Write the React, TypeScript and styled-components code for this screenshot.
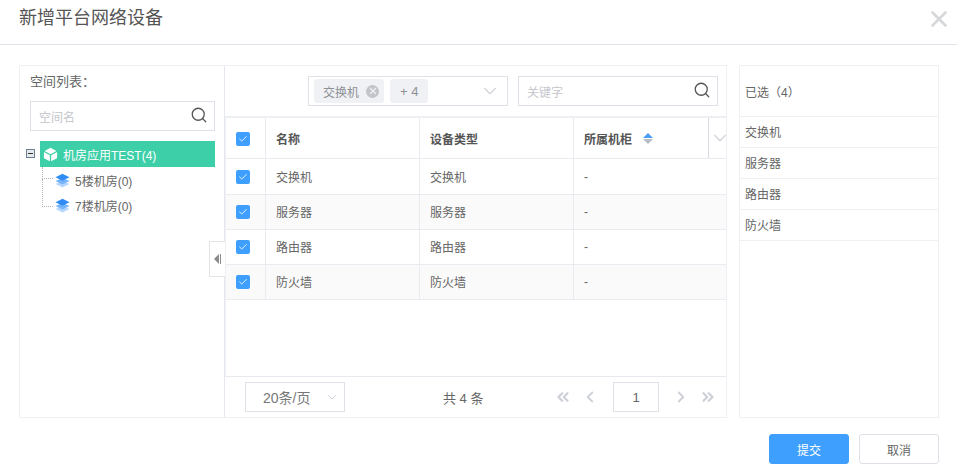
import React from 'react'
import styled, { createGlobalStyle } from 'styled-components'
import { Search, ChevronDown, ChevronLeft, ChevronRight, ChevronsLeft, ChevronsRight, X, Check } from 'lucide-react'

const GlobalStyle = createGlobalStyle`
  html, body { margin: 0; padding: 0; background: #fff; }
  * { box-sizing: border-box; }
  body {
    font-family: "Liberation Sans", "Noto Sans CJK SC", sans-serif;
    font-size: 12px;
    color: #666;
  }
`

const Modal = styled.div`
  width: 957px;
  height: 476px;
  display: flex;
  flex-direction: column;
  overflow: hidden;
`

const Header = styled.header`
  height: 45px;
  flex: none;
  border-bottom: 1px solid #e2e3ea;
  padding: 0 5px 8px 19px;
  display: flex;
  align-items: center;
  justify-content: space-between;
`

const Title = styled.h1`
  margin: 0;
  font-size: 18px;
  font-weight: 400;
  line-height: 36px;
  color: #555;
`

const CloseIcon = styled(X)`
  color: #d6d7db;
  margin-top: 2px;
`

const Body = styled.div`
  height: 353px;
  margin: 20px 18px 0 19px;
  display: flex;
  gap: 12px;
`

const MainBox = styled.div`
  width: 708px;
  display: flex;
  position: relative;
  border: 1px solid #eef0f4;
`

const TreePanel = styled.aside`
  width: 205px;
  flex: none;
  padding: 6px 9px 0 10px;
  border-right: 1px solid #e6e8ef;
`

const PanelLabel = styled.div`
  font-size: 13px;
  line-height: 19px;
  color: #666;
`

const InputBox = styled.div<{ $w: number }>`
  width: ${p => p.$w}px;
  height: 30px;
  flex: none;
  border: 1px solid #dfe1e8;
  padding: 0 6px 0 8px;
  display: flex;
  align-items: center;
  justify-content: space-between;
  background: #fff;
`

const Placeholder = styled.span`
  font-size: 12px;
  color: #c4c6cc;
`

const SearchIcon = styled(Search)`
  color: #555;
  margin-top: -2px;
`

const SpaceSearch = styled(InputBox)`
  margin-top: 10px;
`

const TreeRoot = styled.div`
  position: relative;
  margin-top: 10px;
`

const RootRow = styled.div`
  height: 26px;
  margin-left: 10px;
  background: #3ccfa8;
  color: #fff;
  display: flex;
  align-items: center;
  gap: 5px;
  padding-left: 3px;
  font-size: 12px;
`

const ExpandBox = styled.span`
  position: absolute;
  left: -4px;
  top: 8px;
  width: 9px;
  height: 9px;
  border: 1px solid #6d7f90;
  background: #e4e9ee;
  &::after {
    content: '';
    position: absolute;
    left: 1px;
    right: 1px;
    top: 3px;
    height: 1px;
    background: #333;
  }
`

const ChildRow = styled.div<{ $first?: boolean }>`
  position: relative;
  height: 25px;
  margin-top: ${p => (p.$first ? '1px' : '0')};
  padding-left: 25px;
  display: flex;
  align-items: center;
  gap: 5px;
  font-size: 12px;
  color: #666;
  &::before {
    content: '';
    position: absolute;
    left: 12px;
    top: ${p => (p.$first ? '-1px' : '-14px')};
    height: ${p => (p.$first ? '11px' : '27px')};
    width: 10px;
    border-left: 1px dotted #b5b5b5;
    border-bottom: 1px dotted #b5b5b5;
  }
`

const Collapse = styled.div`
  position: absolute;
  left: 189px;
  top: 175px;
  width: 16px;
  height: 36px;
  background: #fff;
  border: 1px solid #e4e4e4;
  border-right: none;
  display: flex;
  align-items: center;
  justify-content: center;
  gap: 1px;
`

const CollapseArrow = styled.span`
  width: 0;
  height: 0;
  border-top: 5px solid transparent;
  border-bottom: 5px solid transparent;
  border-right: 5px solid #8a8a8a;
`

const CollapseBar = styled.span`
  width: 1px;
  height: 10px;
  background: #8a8a8a;
`

const TablePanel = styled.section`
  flex: 1;
  min-width: 0;
  display: flex;
  flex-direction: column;
`

const FilterBar = styled.div`
  height: 50px;
  flex: none;
  padding: 10px 9px 0 83px;
  display: flex;
  gap: 10px;
`

const SelectBox = styled(InputBox)`
  padding: 0 6px 0 5px;
`

const TagGroup = styled.div`
  display: flex;
  gap: 6px;
`

const Tag = styled.span`
  height: 24px;
  padding: 0 5px 0 9px;
  border-radius: 3px;
  background: #f0f1f4;
  color: #8e9096;
  display: flex;
  align-items: center;
  gap: 7px;
  font-size: 12px;
`

const CountTag = styled(Tag)`
  padding: 0 10px;
  font-size: 13px;
`

const TagClose = styled.span`
  width: 13px;
  height: 13px;
  border-radius: 50%;
  background: #c2c4ca;
  color: #f0f1f4;
  display: flex;
  align-items: center;
  justify-content: center;
`

const Caret = styled(ChevronDown)`
  color: #cfd1d8;
`

const TableWrap = styled.div`
  flex: 1;
  border-top: 2px solid #eeeff2;
  border-bottom: 1px solid #e8e9ef;
  border-right: 1px solid #eeeff2;
  margin-right: 0;
  width: 502px;
  border-left: 1px solid #eeeff2;
`

const Row = styled.div<{ $head?: boolean; $alt?: boolean }>`
  height: ${p => (p.$head ? '41px' : '35px')};
  display: grid;
  grid-template-columns: 40px 154px 154px 1fr;
  background: ${p => (p.$alt ? '#fafafa' : '#fff')};
  border-bottom: 1px solid #e9ebf1;
  ${p => p.$head && 'grid-template-columns: 40px 154px 154px 135px 1fr;'}
  &:nth-child(2) { height: 36px; }
`

const Cell = styled.div<{ $head?: boolean; $lift?: boolean }>`
  display: flex;
  align-items: center;
  padding-left: 10px;
  padding-bottom: ${p => (p.$lift ? '2px' : '0')};
  border-right: 1px solid #e9ebf1;
  font-size: 12px;
  font-weight: ${p => (p.$head ? 700 : 400)};
  color: ${p => (p.$head ? '#555' : '#666')};
  &:last-child { border-right: none; }
`

const CheckCell = styled(Cell)<{ $head?: boolean }>`
  padding-top: ${p => (p.$head ? '1px' : '0')};
`

const CheckMark = styled.span`
  width: 14px;
  height: 14px;
  border-radius: 2px;
  background: #3f9fff;
  color: #fff;
  display: flex;
  align-items: center;
  justify-content: center;
`

const SortIcon = styled.span`
  display: inline-flex;
  flex-direction: column;
  gap: 1px;
  margin-left: 11px;
  &::before, &::after {
    content: '';
    width: 0;
    height: 0;
    border-left: 5px solid transparent;
    border-right: 5px solid transparent;
  }
  &::before { border-bottom: 5px solid #4a9ff5; }
  &::after { border-top: 5px solid #b8bcc6; }
`

const ColToggle = styled.div`
  display: flex;
  align-items: center;
  justify-content: center;
  border-left: 1px solid #d9dbe2;
  margin-left: -1px;
`

const Pager = styled.div`
  height: 40px;
  flex: none;
  padding-left: 20px;
  padding-right: 9px;
  display: flex;
  align-items: center;
  justify-content: space-between;
`

const PageSize = styled.div`
  width: 100px;
  height: 30px;
  border: 1px solid #dfe1e8;
  display: flex;
  align-items: center;
  justify-content: space-between;
  padding: 0 4px 0 17px;
  font-size: 14px;
  color: #777;
`

const Total = styled.div`
  font-size: 13px;
  color: #666;
  margin-left: 98px;
`

const PageControls = styled.div`
  display: flex;
  align-items: center;
  margin-left: auto;
  color: #cdd0d8;
`

const PageNumber = styled.div`
  width: 46px;
  height: 30px;
  margin: 0 13px 0 14px;
  border: 1px solid #dfe1e8;
  display: flex;
  align-items: center;
  justify-content: center;
  font-size: 13px;
  color: #666;
`

const PageBtn = styled.span<{ $gap?: number }>`
  display: flex;
  margin-right: ${p => p.$gap ?? 0}px;
`

const SelectedPanel = styled.aside`
  width: 200px;
  flex: none;
  border: 1px solid #eef0f4;
`

const SelectedHead = styled.div`
  height: 51px;
  padding-left: 5px;
  display: flex;
  align-items: center;
  font-size: 12px;
  color: #666;
  border-bottom: 1px solid #eef0f4;
`

const SelectedRow = styled.div`
  height: 31px;
  padding: 0 0 2px 5px;
  display: flex;
  align-items: center;
  font-size: 12px;
  color: #666;
  border-bottom: 1px solid #eef0f4;
`

const Footer = styled.footer`
  margin-top: 16px;
  padding-right: 18px;
  display: flex;
  justify-content: flex-end;
  gap: 10px;
`

const Button = styled.button<{ $primary?: boolean }>`
  width: 80px;
  height: 30px;
  border-radius: 3px;
  border: 1px solid ${p => (p.$primary ? '#3f9fff' : '#dfe1e8')};
  background: ${p => (p.$primary ? '#3f9fff' : '#fff')};
  color: ${p => (p.$primary ? '#fff' : '#666')};
  font: inherit;
  font-size: 12px;
  padding: 0;
`

const CubeIcon = () => (
  <svg width="15" height="15" viewBox="0 0 16 16" fill="#fff">
    <path d="M8 .8l6.4 3.4L8 7.6 1.6 4.2z" />
    <path d="M1 5.3l6.3 3.4v6.6L1 11.9z" />
    <path d="M15 5.3L8.7 8.7v6.6l6.3-3.4z" />
  </svg>
)

const LayersIcon = () => (
  <svg width="15" height="15" viewBox="0 0 15 15">
    <path d="M7.5 8l7 3-7 3.5-7-3.5z" fill="#b5d7ff" />
    <path d="M7.5 5l7 3-7 3.5-7-3.5z" fill="#75b3fb" />
    <path d="M7.5 .8l7 3.5-7 3.5-7-3.5z" fill="#2f8df5" />
  </svg>
)

const rows = ['交换机', '服务器', '路由器', '防火墙']

const Tick = () => (
  <CheckMark>
    <Check size={10} strokeWidth={2} />
  </CheckMark>
)

const App: React.FC = () => {
  return (
    <Modal>
      <GlobalStyle />
      <Header>
        <Title>新增平台网络设备</Title>
        <CloseIcon size={26} strokeWidth={2.4} />
      </Header>

      <Body>
        <MainBox>
          <TreePanel>
            <PanelLabel>空间列表：</PanelLabel>
            <SpaceSearch $w={185}>
              <Placeholder>空间名</Placeholder>
              <SearchIcon size={18} strokeWidth={1.7} />
            </SpaceSearch>
            <TreeRoot>
              <ExpandBox />
              <RootRow>
                <CubeIcon />
                机房应用TEST(4)
              </RootRow>
              <ChildRow $first>
                <LayersIcon />
                5楼机房(0)
              </ChildRow>
              <ChildRow>
                <LayersIcon />
                7楼机房(0)
              </ChildRow>
            </TreeRoot>
          </TreePanel>

          <Collapse>
            <CollapseArrow />
            <CollapseBar />
          </Collapse>

          <TablePanel>
            <FilterBar>
              <SelectBox $w={200}>
                <TagGroup>
                  <Tag>
                    交换机
                    <TagClose>
                      <X size={10} strokeWidth={3} />
                    </TagClose>
                  </Tag>
                  <CountTag>+ 4</CountTag>
                </TagGroup>
                <Caret size={22} strokeWidth={1.2} />
              </SelectBox>
              <InputBox $w={200}>
                <Placeholder>关键字</Placeholder>
                <SearchIcon size={18} strokeWidth={1.7} />
              </InputBox>
            </FilterBar>

            <TableWrap>
              <Row $head>
                <CheckCell $head>
                  <Tick />
                </CheckCell>
                <Cell $head>名称</Cell>
                <Cell $head>设备类型</Cell>
                <Cell $head>
                  所属机柜
                  <SortIcon />
                </Cell>
                <ColToggle>
                  <Caret size={22} strokeWidth={1.2} />
                </ColToggle>
              </Row>
              {rows.map((name, i) => (
                <Row key={name} $alt={i % 2 === 1}>
                  <CheckCell>
                    <Tick />
                  </CheckCell>
                  <Cell $lift={i > 0}>{name}</Cell>
                  <Cell $lift={i > 0}>{name}</Cell>
                  <Cell>-</Cell>
                </Row>
              ))}
            </TableWrap>

            <Pager>
              <PageSize>
                20条/页
                <Caret size={16} strokeWidth={1.4} />
              </PageSize>
              <Total>共 4 条</Total>
              <PageControls>
                <PageBtn $gap={9}>
                  <ChevronsLeft size={18} strokeWidth={3} />
                </PageBtn>
                <PageBtn>
                  <ChevronLeft size={18} strokeWidth={2.4} />
                </PageBtn>
                <PageNumber>1</PageNumber>
                <PageBtn $gap={9}>
                  <ChevronRight size={18} strokeWidth={2.4} />
                </PageBtn>
                <PageBtn>
                  <ChevronsRight size={18} strokeWidth={3} />
                </PageBtn>
              </PageControls>
            </Pager>
          </TablePanel>
        </MainBox>

        <SelectedPanel>
          <SelectedHead>已选（4）</SelectedHead>
          {rows.map(name => (
            <SelectedRow key={name}>{name}</SelectedRow>
          ))}
        </SelectedPanel>
      </Body>

      <Footer>
        <Button $primary>提交</Button>
        <Button>取消</Button>
      </Footer>
    </Modal>
  )
}

export default App
